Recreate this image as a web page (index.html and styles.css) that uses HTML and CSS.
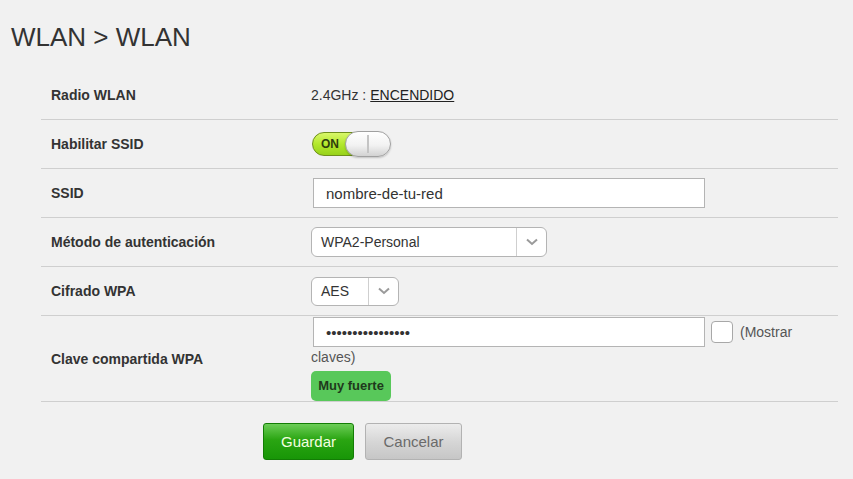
FILE: index.html
```html
<!DOCTYPE html>
<html lang="es">
<head>
<meta charset="utf-8">
<title>WLAN</title>
<link rel="stylesheet" href="styles.css">
</head>
<body>
<h1 class="page-title">WLAN &gt; WLAN</h1>
<form class="form">
  <div class="row">
    <div class="label">Radio WLAN</div>
    <div class="value">2.4GHz : <a class="link" href="#">ENCENDIDO</a></div>
  </div>
  <div class="row">
    <div class="label">Habilitar SSID</div>
    <div class="value">
      <span class="toggle">
        <span class="toggle-track">ON</span>
        <span class="toggle-knob"></span>
      </span>
    </div>
  </div>
  <div class="row">
    <div class="label">SSID</div>
    <div class="value"><input class="text-input" type="text" value="nombre-de-tu-red"></div>
  </div>
  <div class="row">
    <div class="label">Método de autenticación</div>
    <div class="value">
      <div class="select select-wide">
        <span class="select-value">WPA2-Personal</span>
        <span class="select-arrow"><svg width="12" height="8" viewBox="0 0 12 8"><path d="M1 1.5 L6 6 L11 1.5" fill="none" stroke="#9a9a9a" stroke-width="2"/></svg></span>
      </div>
    </div>
  </div>
  <div class="row">
    <div class="label">Cifrado WPA</div>
    <div class="value">
      <div class="select select-small">
        <span class="select-value">AES</span>
        <span class="select-arrow"><svg width="12" height="8" viewBox="0 0 12 8"><path d="M1 1.5 L6 6 L11 1.5" fill="none" stroke="#9a9a9a" stroke-width="2"/></svg></span>
      </div>
    </div>
  </div>
  <div class="row row-tall">
    <div class="label">Clave compartida WPA</div>
    <div class="value value-flow">
      <input class="text-input" type="password" value="1234567890123456"><span class="checkbox"></span><span class="show-text">(Mostrar claves)</span>
      <div class="strength">Muy fuerte</div>
    </div>
  </div>
  <div class="actions">
    <button type="button" class="btn btn-save">Guardar</button>
    <button type="button" class="btn btn-cancel">Cancelar</button>
  </div>
</form>
</body>
</html>
```

FILE: styles.css
```css
html, body {
  margin: 0;
  padding: 0;
  background: #f1f1f1;
  font-family: "Liberation Sans", Arial, sans-serif;
  color: #333;
}

.page-title {
  margin: 0;
  padding: 22px 0 0 11px;
  font-size: 26px;
  line-height: 30px;
  font-weight: normal;
  color: #333;
}

.form {
  margin: 19px 0 0 41px;
  width: 797px;
}

.row {
  display: grid;
  grid-template-columns: 270px 1fr;
  align-items: center;
  min-height: 48px;
  border-bottom: 1px solid #cfcfcf;
}

.row-tall {
  min-height: 85px;
}

.label {
  padding-left: 10px;
  font-size: 14px;
  font-weight: bold;
  color: #333;
}

.value {
  font-size: 14px;
  color: #333;
  display: flex;
  align-items: center;
}

.link {
  color: #222;
  text-decoration: underline;
  margin-left: 4px;
}

.toggle {
  position: relative;
  display: inline-block;
  width: 79px;
  height: 26px;
  margin-left: 1px;
}

.toggle-track {
  display: block;
  box-sizing: border-box;
  width: 52px;
  height: 24px;
  margin-top: 1px;
  border-radius: 12px;
  border: 1px solid #6f8f1c;
  background: linear-gradient(#d9f76a, #b3e82c 50%, #97d21a);
  font-size: 12px;
  font-weight: bold;
  line-height: 22px;
  padding-left: 8px;
  color: #2e3d0c;
}

.toggle-knob {
  position: absolute;
  right: 0;
  top: 0;
  box-sizing: border-box;
  width: 46px;
  height: 26px;
  border-radius: 13px;
  border: 1px solid #a0a0a0;
  background: linear-gradient(#ffffff, #f2f2f2 55%, #d2d2d2);
  box-shadow: 0 1px 2px rgba(0,0,0,0.2);
}

.toggle-knob::after {
  content: "";
  position: absolute;
  left: 21px;
  top: 3px;
  width: 2px;
  height: 18px;
  background: #c4c4c4;
}

.text-input {
  box-sizing: border-box;
  width: 392px;
  height: 30px;
  margin: 0 0 0 2px;
  padding: 0 12px;
  border: 1px solid #b4b4b4;
  background: #fff;
  font-family: "Liberation Sans", Arial, sans-serif;
  font-size: 15px;
  color: #333;
  outline: none;
}

.select {
  box-sizing: border-box;
  display: flex;
  height: 30px;
  border: 1px solid #b4b4b4;
  border-radius: 6px;
  background: #fff;
}

.select-wide {
  width: 236px;
}

.select-small {
  width: 88px;
  height: 29px;
}

.select-value {
  flex: 1;
  padding-left: 9px;
  font-size: 14px;
  line-height: 28px;
  color: #333;
}

.select-small .select-value {
  line-height: 27px;
}

.select-arrow {
  width: 29px;
  border-left: 1px solid #cfcfcf;
  display: flex;
  align-items: center;
  justify-content: center;
}

.value-flow {
  display: block;
  align-self: start;
  padding-top: 1px;
  line-height: 18px;
}

.value-flow .text-input {
  vertical-align: middle;
}

.checkbox {
  display: inline-block;
  box-sizing: border-box;
  width: 22px;
  height: 22px;
  margin: 0 7px 0 6px;
  border: 1px solid #a8a8a8;
  border-radius: 4px;
  background: #fff;
  vertical-align: middle;
}

.show-text {
  vertical-align: middle;
  color: #555;
}

.strength {
  display: block;
  box-sizing: border-box;
  margin-top: 5px;
  width: 80px;
  height: 30px;
  border-radius: 5px;
  background: #58c85a;
  color: #1f3a1c;
  font-size: 13px;
  font-weight: bold;
  line-height: 30px;
  text-align: center;
}

.actions {
  display: flex;
  gap: 11px;
  padding: 21px 0 0 222px;
}

.btn {
  box-sizing: border-box;
  height: 37px;
  border-radius: 3px;
  font-family: "Liberation Sans", Arial, sans-serif;
  font-size: 15px;
  padding: 0;
  cursor: pointer;
}

.btn-save {
  width: 91px;
  border: 1px solid #137d05;
  background: linear-gradient(#6ccd57, #2aa512 45%, #189607);
  color: #f4ffe0;
}

.btn-cancel {
  width: 97px;
  border: 1px solid #b2b2b2;
  background: linear-gradient(#ececec, #d6d6d6 50%, #c6c6c6);
  color: #6a6a6a;
}
```
